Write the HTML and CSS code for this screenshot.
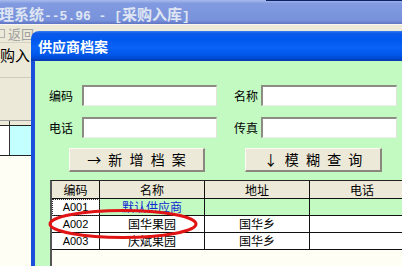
FILE: index.html
```html
<!DOCTYPE html>
<html>
<head>
<meta charset="utf-8">
<link rel="stylesheet" href="styles.css">
</head>
<body>
<div class="screen">
  <div class="app">
    <div class="app-title"><span class="app-title-text">理系统<span class="mono">--5.96 - [</span>采购入库<span class="mono">]</span></span></div>
    <div class="toolbar"><span class="tb-icon"></span><span class="tb-text">返回</span></div>
    <div class="panel"><span class="panel-text">购入</span></div>
    <div class="panel2"></div>
    <div class="bg-grid">
      <div class="bg-head"><div class="bc1"></div><div class="bc2"></div></div>
      <div class="bg-row"><div class="bc1 white"></div><div class="bc2 cyan"></div></div>
    </div>
    <div class="bg-rest"></div>
  </div>

  <div class="dialog">
    <div class="dlg-title">供应商档案</div>
    <div class="dlg-body">
      <div class="form-row">
        <span class="lbl">编码</span><span class="input in-left"></span>
        <span class="lbl lbl-right">名称</span><span class="input in-right"></span>
      </div>
      <div class="form-row">
        <span class="lbl">电话</span><span class="input in-left"></span>
        <span class="lbl lbl-right">传真</span><span class="input in-right"></span>
      </div>
      <div class="btn-row">
        <div class="btn btn-add">→ 新 增 档 案</div>
        <div class="btn btn-find">↓ 模 糊 查 询</div>
      </div>
      <div class="grid">
        <div class="g-row g-head">
          <div class="cell">编码</div><div class="cell">名称</div><div class="cell">地址</div><div class="cell">电话</div>
        </div>
        <div class="g-row">
          <div class="cell code focus">A001</div><div class="cell green blue">默认供应商</div><div class="cell green"></div><div class="cell green"></div>
        </div>
        <div class="g-row">
          <div class="cell code">A002</div><div class="cell">国华果园</div><div class="cell">国华乡</div><div class="cell"></div>
        </div>
        <div class="g-row">
          <div class="cell code">A003</div><div class="cell">庆斌果园</div><div class="cell">国华乡</div><div class="cell"></div>
        </div>
        <div class="g-empty"></div>
      </div>
      <svg class="mark" width="154" height="34" viewBox="0 0 154 34">
        <ellipse cx="76" cy="17" rx="73" ry="13.5" fill="none" stroke="#e01414" stroke-width="3"/>
      </svg>
    </div>
  </div>
</div>
</body>
</html>
```

FILE: styles.css
```css
* { box-sizing: border-box; margin: 0; padding: 0; }
html, body { margin: 0; }
body {
  width: 402px; height: 266px; overflow: hidden;
  font-family: "Noto Sans CJK SC", "Liberation Sans", sans-serif;
  font-size: 12px; color: #000;
}
.screen { position: relative; width: 402px; height: 266px; overflow: hidden; background: #fefef4; }

/* background application */
.app { display: flex; flex-direction: column; height: 100%; }
.app-title {
  height: 24px; white-space: nowrap; overflow: hidden;
  background:
    linear-gradient(to right, transparent 266px, #0a2468 266px) top left / 100% 1px no-repeat,
    linear-gradient(#a9bbee, #819ae0 15%, #7b95dd 60%, #7891db 85%, #5f74c2);
}
.app-title-text {
  display: block; margin-left: -1px;
  font-size: 15px; font-weight: bold; line-height: 27px; color: #dfe5f3;
}
.mono { font-family: "Liberation Mono", monospace; font-size: 13px; }
.toolbar {
  height: 19px; background: #ece9d8; display: flex; align-items: center;
  border-top: 1px solid #f8f7f0; border-bottom: 1px solid #d6d2c2;
}
.tb-icon { width: 5px; height: 9px; margin-left: 0; border: 1px solid #b0b0b0; border-left: none; }
.tb-text { margin-left: 3px; font-size: 13px; color: #a0a0a0; line-height: 14px; }
.panel { height: 34px; background: #ece9d8; padding-top: 3px; }
.panel-text { font-size: 15px; line-height: 18px; margin-left: 0; }
.panel2 { height: 43px; background: #ece9d8; border-top: 1px solid #cfccbf; }
.bg-grid { border-top: 1px solid #a0a0a0; }
.bg-head { display: flex; height: 5px; background: #ece9d8; border-bottom: 1px solid #222; }
.bg-row { display: flex; height: 30px; border-bottom: 1px solid #222; }
.bc1 { width: 10px; border-right: 1px solid #333; }
.bc2 { flex: 1; }
.white { background: #fff; }
.cyan { background: #c4ffff; }
.bg-rest { flex: 1; background: #fefef4; }

/* dialog window */
.dialog {
  position: absolute; left: 31px; top: 31px; width: 380px; height: 240px;
  display: flex; flex-direction: column;
  border-top-left-radius: 8px; overflow: hidden;
}
.dlg-title {
  height: 30px; flex: none; padding-left: 7px;
  font-size: 14px; font-weight: bold; line-height: 31px; color: #fff;
  background: linear-gradient(#3a7cf2, #0c5ae9 8%, #0058ee 30%, #0a62f6 55%, #0057ea 80%, #0048d0 92%, #0c36a8);
}
.dlg-body {
  position: relative; flex: 1;
  background: #c2fac2;
  border-left: 4px solid #1a4fdc;
  padding: 24px 0 0 14px;
}
.form-row { display: flex; align-items: center; height: 21px; margin-bottom: 11px; }
.lbl { width: 24px; font-size: 12px; line-height: 14px; flex: none; }
.lbl-right { margin-left: 17px; }
.input {
  height: 21px; background: #fff; flex: none;
  border-style: solid; border-width: 2px 1px 1px 2px;
  border-color: #8c8c84 #e4e4dc #eeeeea #8c8c84;
}
.in-left { margin-left: 9px; width: 135px; }
.in-right { margin-left: 3px; width: 136px; }
.btn-row { display: flex; margin-top: -1px; padding-left: 20px; height: 24px; }
.btn {
  height: 24px; background: #ece9d8;
  border-style: solid; border-width: 1px 2px 2px 1px;
  border-color: #fbfaf5 #8a887e #8a887e #fbfaf5;
  font-size: 14px; line-height: 21px; text-align: center; word-spacing: 4px;
  flex: none;
}
.btn-add { width: 136px; }
.btn-find { width: 137px; margin-left: 40px; }

.grid {
  margin-top: 8px; margin-left: 1px; width: 400px; height: 120px;
  border-top: 1px solid #222; border-left: 2px solid #555;
  background: #fefef4;
  display: flex; flex-direction: column;
}
.g-row { display: grid; grid-template-columns: 48px 105px 105px 105px; height: 17px; flex: none; }
.g-head { height: 18px; background: #ece9d8; }
.cell {
  border-right: 1px solid #111; border-bottom: 1px solid #111;
  text-align: center; font-size: 12px; line-height: 16px; background: #fff; white-space: nowrap;
}
.g-head .cell { background: #ece9d8; line-height: 17px; }
.code { font-family: "Liberation Sans", sans-serif; font-size: 11px; }
.focus { outline: 1px dotted #333; outline-offset: -1px; }
.green { background: #c2fac2; }
.blue { color: #1028d0; }
.g-empty { flex: 1; }

.mark { position: absolute; left: 12px; top: 146px; }
```
